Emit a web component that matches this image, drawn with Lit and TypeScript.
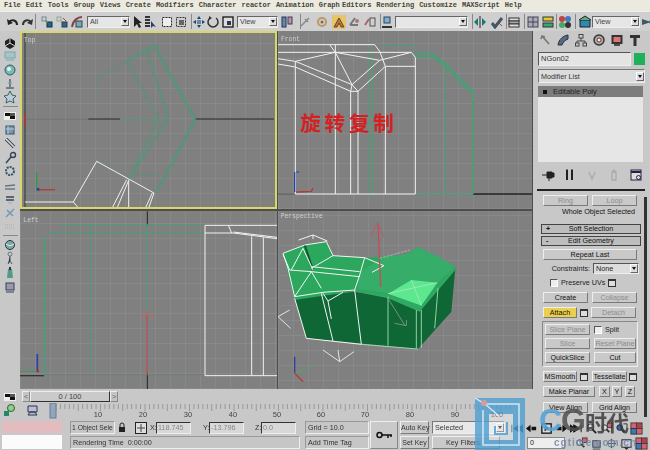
import { LitElement, html, css, svg } from "lit";
import { customElement } from "lit/decorators.js";

const ICONS: Record<string, unknown> = {
  undo: svg`<path d="M11 10C11 5 6 4 3 7" fill="none" stroke="#222" stroke-width="2"/><path d="M1 4l1 6 5-2z" fill="#222"/>`,
  redo: svg`<path d="M3 10C3 5 8 4 11 7" fill="none" stroke="#333" stroke-width="2"/><path d="M13 4l-1 6-5-2z" fill="#333"/>`,
  link: svg`<rect x="2" y="2" width="4" height="4" fill="none" stroke="#789"/><rect x="7" y="7" width="5" height="5" fill="#268" stroke="#134"/><path d="M5 5l3 3" stroke="#2a8a50"/>`,
  unlink: svg`<rect x="2" y="2" width="4" height="4" fill="none" stroke="#8a9"/><rect x="7" y="7" width="5" height="5" fill="#367" stroke="#245"/><path d="M8 3l3 3" stroke="#c33"/>`,
  bind: svg`<path d="M2 12C3 5 8 2 12 2" fill="none" stroke="#844" stroke-width="2"/><rect x="6" y="6" width="6" height="6" fill="#7aa" stroke="#345"/>`,
  arrow: svg`<path d="M4 1v11l3-3 2 4 2-1-2-4h3z" fill="#222"/>`,
  byname: svg`<path d="M2 2h5M2 5h5M2 8h5M2 11h5" stroke="#333" stroke-width="2"/><path d="M8 6v7l2-2 3 1z" fill="#246"/>`,
  rect: svg`<rect x="2.5" y="2.5" width="9" height="9" fill="#eee" stroke="#222" stroke-dasharray="2 1"/>`,
  win: svg`<rect x="2.5" y="2.5" width="9" height="9" fill="none" stroke="#333" stroke-dasharray="2 1"/><rect x="5" y="5" width="5" height="5" fill="#666"/>`,
  move: svg`<path d="M7 1l2 3H5zM7 13l2-3H5zM1 7l3-2v4zM13 7l-3-2v4z" fill="#246"/><rect x="5" y="5" width="4" height="4" fill="#68a"/>`,
  rot: svg`<path d="M4 3a5 5 0 1 0 6 0" fill="none" stroke="#333" stroke-width="1.5"/><path d="M3 1l3 2-3 2z" fill="#333"/>`,
  scale: svg`<rect x="2" y="2" width="10" height="10" fill="#ddd" stroke="#222" stroke-width="1.4"/><rect x="6" y="6" width="4" height="4" fill="#335"/>`,
  center: svg`<rect x="2" y="2" width="4" height="10" fill="#68a" stroke="#235"/><rect x="8" y="2" width="4" height="7" fill="#a9a" stroke="#535"/>`,
  pin: svg`<path d="M3 11l8-8M7 4l3 3" stroke="#888" stroke-width="1.5"/>`,
  snap2: svg`<circle cx="7" cy="7" r="4" fill="none" stroke="#b96" stroke-width="2"/><circle cx="7" cy="7" r="1.5" fill="#864"/>`,
  magnet: svg`<rect width="14" height="14" fill="#e8c468"/><path d="M2 12L7 3l5 9H9L7 8l-2 4z" fill="#b67a30" stroke="#643"/>`,
  ang: svg`<path d="M3 10L8 3M3 10h8" stroke="#777" stroke-width="2"/><circle cx="10" cy="6" r="2" fill="#a77"/>`,
  pct: svg`<path d="M2 10l4-6" stroke="#a66" stroke-width="2"/><rect x="7" y="3" width="5" height="8" fill="none" stroke="#555"/>`,
  spin: svg`<rect x="4" y="2" width="6" height="6" fill="#8ac" stroke="#246"/><path d="M2 12h10" stroke="#333" stroke-width="2"/>`,
  mirror: svg`<path d="M7 1v12" stroke="#222"/><path d="M5 3v8L1 7zM9 3v8l4-4z" fill="#1a7a70"/>`,
  align: svg`<path d="M2 8l3 4 7-9" fill="none" stroke="#456" stroke-width="3"/><path d="M9 8l3 3" stroke="#b33"/>`,
  layers: svg`<rect x="2" y="3" width="10" height="3" fill="#ddd" stroke="#333"/><rect x="2" y="6" width="10" height="3" fill="#aaa" stroke="#333"/><rect x="2" y="9" width="10" height="3" fill="#ddd" stroke="#333"/>`,
  curve: svg`<rect x="2" y="2" width="10" height="10" fill="#aab" stroke="#445"/><path d="M2 7h10M7 2v10" stroke="#445"/>`,
  schem: svg`<rect x="2" y="2" width="10" height="4" fill="#dc3" stroke="#333"/><rect x="2" y="8" width="10" height="4" fill="#3a7" stroke="#333"/>`,
  mat: svg`<circle cx="4" cy="4" r="3" fill="#b44"/><circle cx="10" cy="4" r="3" fill="#47b"/><circle cx="4" cy="10" r="3" fill="#4a6"/><circle cx="10" cy="10" r="3" fill="#333"/>`,
  render: svg`<path d="M2 5h10v7H2z" fill="#38a" stroke="#123"/><path d="M1 5l6-4 6 4" fill="#6a7" stroke="#123"/>`,
  quick: svg`<path d="M2 4l9 3-9 3z" fill="#456"/><circle cx="11" cy="7" r="2" fill="#287"/>`,
  cmdCreate: svg`<path d="M4 3l7 8M3 6l1-3 3 1" stroke="#777" stroke-width="1.6" fill="none"/>`,
  cmdMod: svg`<path d="M2 12C3 6 7 3 12 2v4C9 7 7 9 6 12z" fill="#5a6a80" stroke="#234"/>`,
  cmdHier: svg`<path d="M7 5v3M3 10V8h8v2" stroke="#444" fill="none"/><rect x="5" y="1.5" width="4" height="3.5" fill="#ccc" stroke="#444"/><rect x="1.5" y="10" width="3.5" height="3" fill="#ccc" stroke="#444"/><rect x="9" y="10" width="3.5" height="3" fill="#ccc" stroke="#444"/>`,
  cmdMot: svg`<circle cx="7" cy="7" r="5" fill="#aaa" stroke="#333" stroke-width="1.4"/><circle cx="7" cy="7" r="2" fill="#eee" stroke="#833"/>`,
  cmdDisp: svg`<rect x="1.5" y="2" width="11" height="9" fill="#333"/><rect x="3.5" y="4" width="7" height="5" fill="#d77"/><path d="M4 12h6" stroke="#333" stroke-width="1.6"/>`,
  cmdUtil: svg`<path d="M2 2h10v3H8.5v8h-3V5H2z" fill="#333"/>`,
  pinS: svg`<path d="M1 7h5M6 4h5v6H6zM11 5h2v4h-2zM8 10v3" stroke="#222" fill="#222"/>`,
  fork: svg`<path d="M4 2v10M9 2v10" stroke="#222" stroke-width="2"/><path d="M3 2h2M8 2h2" stroke="#222"/>`,
  vv: svg`<path d="M4 4l3 7 3-7" fill="none" stroke="#aaa" stroke-width="1.3"/>`,
  trash: svg`<path d="M5 4h4v8H5z" fill="none" stroke="#aaa" stroke-width="1.3"/><circle cx="7" cy="3" r="1.3" fill="none" stroke="#aaa"/>`,
  cfg: svg`<rect x="2" y="2" width="10" height="10" fill="#ddd" stroke="#224"/><path d="M2 4h10" stroke="#224" stroke-width="2"/><circle cx="9.5" cy="9.5" r="2" fill="none" stroke="#224"/>`,
  sphere: svg`<circle cx="7" cy="7" r="4.5" fill="#7aa" stroke="#333"/><path d="M3 6c3 2 5 2 8 0" stroke="#eee" fill="none"/>`,
  geom: svg`<path d="M7 2l5 3v5l-5 3-5-3V5z" fill="#222"/><path d="M7 2v5l5 3M7 7l-5 3" stroke="#ddd"/>`,
  shapes: svg`<rect x="2" y="3" width="10" height="6" fill="#a8c4c8" stroke="#7aa"/><path d="M3 11h8" stroke="#9bb" stroke-width="2"/>`,
  lights: svg`<circle cx="7" cy="7" r="5" fill="#7ba" stroke="#357"/><circle cx="6" cy="6" r="2" fill="#eee"/>`,
  cam: svg`<path d="M7 2v8M3 11h8" stroke="#567" stroke-width="1.5"/><path d="M5 6h4" stroke="#7a9"/>`,
  star: svg`<path d="M7 1l2 4 4 1-3 3 1 4-4-2-4 2 1-4-3-3 4-1z" fill="#bcd" stroke="#365"/>`,
  film: svg`<rect x="1" y="3" width="12" height="8" fill="#eee"/><rect x="2" y="4" width="5" height="3" fill="#111"/><rect x="7" y="7" width="5" height="3" fill="#111"/><rect x="7" y="4" width="5" height="3" fill="#555"/>`,
  box3: svg`<rect x="3" y="3" width="8" height="8" fill="#79a" stroke="#356"/><path d="M5 3v8M3 6h8" stroke="#bcd"/>`,
  tube: svg`<path d="M3 3l8 8" stroke="#345" stroke-width="3.4"/><path d="M3 3l8 8" stroke="#ddd" stroke-width="1.6"/>`,
  key2: svg`<circle cx="10" cy="4" r="2.5" fill="none" stroke="#345" stroke-width="1.4"/><path d="M8 6l-5 6" stroke="#345" stroke-width="1.4"/>`,
  gear: svg`<circle cx="7" cy="7" r="4" fill="none" stroke="#356" stroke-width="2" stroke-dasharray="2 1"/>`,
  dash: svg`<path d="M2 5l10-1M2 8h10" stroke="#678" stroke-width="1.4"/>`,
  dash2: svg`<path d="M3 4h8M3 7h8" stroke="#345" stroke-width="1.4"/><path d="M5 10h4" stroke="#aaa"/>`,
  blue: svg`<path d="M3 11L11 3M4 4l6 6" stroke="#79b" stroke-width="1.6"/>`,
  faint: svg`<path d="M2 6h10M2 9h10" stroke="#aaa" stroke-dasharray="1 1"/>`,
  walk: svg`<circle cx="7" cy="3" r="2" fill="none" stroke="#678"/><path d="M7 5v5l-2 3M7 10l2 3" stroke="#456"/>`,
  bottle: svg`<path d="M5 3h4l1 9H4z" fill="#598"/><path d="M6 1h2v3H6z" fill="#334"/>`,
  zoom: svg`<circle cx="6" cy="5.500" r="3.500" fill="#cde" stroke="#222"/><path d="M8 8l4 4" stroke="#222" stroke-width="2"/>`,
  zoomR: svg`<circle cx="5" cy="6" r="3" fill="#cde" stroke="#333"/><path d="M7 8l3 3" stroke="#333" stroke-width="2"/><rect x="8" y="1" width="5" height="5" fill="#c67" stroke="#533"/>`,
  zoomB: svg`<circle cx="5" cy="6" r="3" fill="#36a" stroke="#123"/><path d="M7 8l3 3" stroke="#123" stroke-width="2"/><path d="M9 2h4v4" fill="none" stroke="#333"/>`,
  zoomG: svg`<rect x="1" y="1" width="6" height="6" fill="#c67" stroke="#533"/><rect x="7" y="1" width="6" height="6" fill="#a45" stroke="#533"/><rect x="1" y="7" width="6" height="6" fill="#47a" stroke="#235"/><rect x="7" y="7" width="6" height="6" fill="#c67" stroke="#533"/>`,
  fist: svg`<rect x="3" y="4" width="8" height="7" fill="#99a" stroke="#345"/><path d="M3 13h8" stroke="#345"/>`,
  orbit: svg`<circle cx="7" cy="7" r="4" fill="none" stroke="#678"/><path d="M2 7h10M7 2v10" stroke="#456"/>`,
  trk: svg`<rect x="2" y="3" width="10" height="8" fill="#ccd" stroke="#222"/><path d="M4 11l3 3 3-3" fill="#333"/>`,
  magG: svg`<circle cx="8" cy="5" r="3.500" fill="#9c8" stroke="#263"/><path d="M5 8l-3 4" stroke="#263" stroke-width="2"/><path d="M1 8h5v5H1z" fill="#286"/>`,
  prev: svg`<path d="M2 3v8M10 3v8L4 7zM14 3v8L8 7z" fill="#12345a" stroke="#12345a"/>`,
  stepB: svg`<path d="M6 3v8L1 7zM12 5v4H7V5z" fill="#111"/>`,
  play: svg`<rect x="2" y="2" width="10" height="10" fill="#ddd" stroke="#111" stroke-width="1.400"/><path d="M5 4v6l5-3z" fill="#111"/>`,
  stepF: svg`<path d="M8 3v8l5-4zM2 5v4h5V5z" fill="#111"/>`,
  next: svg`<path d="M12 3v8M4 3v8l6-4zM0 3v8l6-4z" fill="#111" stroke="#111"/>`,
};

const icon = (name: string) => html`<svg class="ic" viewBox="0 0 14 14">${ICONS[name]}</svg>`;

const TOOLS: [string, number][] = [
  ["undo", 13], ["redo", 27], ["|", 35], ["link", 47], ["unlink", 62], ["bind", 77], ["#all", 87],
  ["arrow", 137], ["byname", 150], ["rect", 167], ["win", 181], ["|", 191], ["move", 199], ["rot", 213], ["scale", 228],
  ["#view", 237], ["center", 287], ["|", 300], ["pin", 305], ["snap2", 322], ["magnet", 339], ["ang", 354], ["pct", 370],
  ["|", 380], ["spin", 387], ["#named", 395], ["|", 472], ["mirror", 480], ["align", 497], ["|", 506], ["layers", 514], ["|", 524],
  ["curve", 533], ["schem", 548], ["|", 556], ["mat", 565], ["|", 575], ["render", 585], ["#view2", 592], ["quick", 647],
];

const LEFT: [string, number][] = [
  ["geom", 43], ["shapes", 56], ["lights", 70], ["cam", 84], ["star", 97], ["-", 106], ["film", 116], ["box3", 130], ["tube", 143],
  ["key2", 158], ["gear", 171], ["dash", 188], ["dash2", 200], ["blue", 213], ["faint", 226], ["-", 235], ["sphere", 245], ["walk", 258], ["bottle", 273], ["fist", 286],
];

const itemWidth = (k: string) => (k === "|" ? 1 : k === "#all" ? 43 : k === "#view" ? 41 : k === "#named" ? 73 : k === "#view2" ? 48 : 14);
const itemStart = (k: string, x: number) => (k.startsWith("#") || k === "|" ? x : x - 7);

const GRID_DEFS = svg`<defs><pattern id="g" width="45" height="45" patternUnits="userSpaceOnUse"><path d="M45 0H0V45" fill="none" stroke="#939393" stroke-width="2.500"/></pattern></defs>`;

@customElement("app-root")
export class AppRoot extends LitElement {
  static styles = css`
    :host { display: block; width: 650px; height: 450px; overflow: hidden; position: relative; background: #c8c8c8; font-family: "Liberation Sans", Arial, sans-serif; font-size: 7.2px; color: #222; }
    * { box-sizing: border-box; }
    .blurred { width: 650px; height: 450px; display: flex; flex-direction: column; filter: blur(0.5px); }
    .menu { height: 11px; background: #eceadf; display: flex; gap: 5px; word-spacing: -2px; padding-left: 4px; align-items: center; font: bold 7px/11px "Liberation Mono", monospace; color: #444; white-space: nowrap; }
    .toolbar { height: 20px; display: flex; align-items: center; background: #cfcfcf; border-top: 1px solid #eee; flex: none; }
    .ic { width: 14px; height: 14px; display: block; flex: none; }
    .tsep { width: 1px; height: 15px; background: #888; flex: none; }
    .combo { height: 12px; background: #e6e6e6; border: 1px solid; border-color: #666 #eee #eee #666; display: flex; align-items: center; justify-content: space-between; padding-left: 2px; font-size: 7.2px; color: #444; flex: none; }
    .drop { width: 8px; height: 9px; background: #ddd; border: 1px solid; border-color: #fff #666 #666 #fff; display: flex; align-items: center; justify-content: center; flex: none; }
    .drop::after { content: ""; border: 2px solid transparent; border-top: 3px solid #111; border-bottom: 0; }
    .body { display: flex; height: 389px; flex: none; }
    .left { width: 533px; display: flex; flex-direction: column; flex: none; }
    .main { display: flex; height: 358px; flex: none; }
    .lbar { width: 20px; display: flex; flex-direction: column; align-items: center; flex: none; }
    .lsep { width: 15px; height: 1px; background: #888; flex: none; }
    .vps { display: grid; grid-template-columns: 257px 254px; grid-template-rows: 178px 178px; column-gap: 1px; row-gap: 2px; background: #4e4e4e; width: 513px; height: 358px; padding-right: 1px; }
    .vp { background: #808080; position: relative; overflow: hidden; }
    .vp svg { display: block; width: 100%; height: 100%; }
    .active { outline: 2px solid #d8d868; outline-offset: -2px; }
    .vt { font: 19px "Liberation Mono", monospace; fill: #d0d0d0; }
    .cn { font-family: "Noto Sans CJK SC", sans-serif; font-weight: 700; font-size: 62px; fill: #d42020; letter-spacing: 11px; }
    .slider { height: 14px; display: flex; align-items: center; flex: none; padding-top: 1px; }
    .slbtn { width: 8px; height: 11px; background: #c4c4c4; border: 1px solid; border-color: #eee #888 #888 #eee; font-size: 7px; display: flex; align-items: center; justify-content: center; color: #666; flex: none; }
    .sl { width: 80px; height: 11px; background: #cacaca; border: 1px solid; border-color: #eee #333 #333 #eee; text-align: center; line-height: 9px; font-size: 7.5px; color: #444; flex: none; }
    .icoL { width: 20px; display: flex; justify-content: center; flex: none; }
    .ml2 { margin-left: 2px; }
    .track { height: 17px; display: flex; flex: none; }
    .track svg.tk { width: 513px; height: 17px; display: block; }
    .tknum { font: 7.5px "Liberation Sans", sans-serif; fill: #444; text-anchor: middle; }
    .panel { width: 117px; flex: none; padding: 2px 0 0 5px; background: #c8c8c8; display: flex; flex-direction: column; position: relative; }
    .tabs { display: flex; height: 15px; gap: 4px; flex: none; }
    .row { display: flex; flex: none; align-items: center; }
    .name { width: 93px; height: 14px; background: #e4e4e4; border: 1px solid; border-color: #555 #eee #eee #555; font-size: 7.5px; line-height: 12px; padding-left: 2px; color: #333; }
    .swatch { width: 11px; height: 12px; background: #1fb059; margin-left: 3px; }
    .mod { width: 107px; height: 14px; margin-top: 3px; background: #dcdcdc; border: 1px solid; border-color: #777 #eee #eee #777; display: flex; align-items: center; justify-content: space-between; padding-left: 2px; color: #333; flex: none; }
    .stack { width: 105px; height: 76px; margin-top: 3px; background: #e6e6e6; flex: none; }
    .stackrow { height: 11px; background: #7c7c7c; color: #222; display: flex; align-items: center; gap: 6px; padding-left: 5px; font-size: 7.5px; }
    .bullet { width: 4px; height: 4px; background: #111; flex: none; }
    .stackicons { margin-top: 6px; height: 14px; display: flex; gap: 8px; padding-left: 3px; flex: none; }
    .thick { width: 108px; height: 2px; margin: 7px 0 0 -1px; background: #222; flex: none; }
    .roll { position: relative; padding-left: 3px; flex: 1; margin-top: 4px; }
    .scroll { position: absolute; right: 3px; top: 2px; bottom: 3px; width: 3px; background: #333; }
    .bb { height: 11px; background: #c9c9c9; border: 1px solid; border-color: #eee #7a7a7a #7a7a7a #eee; line-height: 9px; text-align: center; color: #111; white-space: nowrap; flex: none; }
    .dis { color: #8c8c8c; }
    .w45 { width: 45px; }
    .two { display: flex; gap: 4px; padding-left: 2px; flex: none; }
    .topbox { width: 100px; height: 18px; text-align: right; padding: 1px 6px 0 0; color: #111; line-height: 10px; flex: none; }
    .rb { width: 100px; height: 10px; background: #bdbdbd; border: 1px solid #444; line-height: 8px; text-align: center; position: relative; color: #111; flex: none; }
    .rb b { position: absolute; left: 4px; top: 0; font-weight: 700; }
    .rb2 { margin-top: 2px; }
    .wide { width: 94px; }
    .constr { display: flex; align-items: center; height: 11px; margin-top: 3px; flex: none; }
    .constr > span { width: 49px; text-align: right; margin-right: 3px; }
    .sel { width: 46px; height: 11px; background: #ddd; border: 1px solid; border-color: #555 #eee #eee #555; display: flex; align-items: center; justify-content: space-between; padding-left: 2px; }
    .chk { width: 8px; height: 8px; background: #eee; border: 1px solid; border-color: #555 #fff #fff #555; flex: none; }
    .pres { display: flex; align-items: center; height: 11px; margin-top: 3px; padding-left: 9px; flex: none; }
    .pres span { margin-left: 3px; width: 47px; white-space: nowrap; }
    .dots { width: 8px; height: 8px; background: #ddd; border: 1px solid #333; border-top-width: 2px; flex: none; }
    .att { width: 34px; background: #ecd04c; }
    .m3 { margin-top: 3px; }
    .m4 { margin-top: 4px; }
    .m5 { margin-top: 5px; }
    .cen { align-self: center; }
    .d1 { margin-left: 3px; }
    .d2 { margin: 0 4px 0 3px; }
    .d3 { margin-left: 2px; }
    .ml3 { margin-left: 3px; }
    .gap0 { gap: 0; align-items: center; }
    .w34 { width: 34px; }
    .w35 { width: 35px; }
    .w42 { width: 42px; }
    .w52 { width: 52px; }
    .w11 { width: 11px; }
    .wy { width: 10px; margin-left: -2px; }
    .wz { width: 10px; margin-left: -1px; }
    .gp { width: 96px; height: 46px; margin: 3px 0 0 1px; border: 1px solid #888; border-right-color: #eee; border-bottom-color: #eee; padding: 2px 0 0 2px; flex: none; display: flex; flex-direction: column; gap: 3px; }
    .gp .two { padding-left: 0; }
    .gtxt { margin-left: 3px; }
    .status { height: 30px; display: flex; flex: none; background: #c8c8c8; }
    .stL { width: 60px; margin-left: 2px; display: flex; flex-direction: column; gap: 2px; padding-top: 1px; flex: none; }
    .pink { height: 12px; background: #e2bcbf; }
    .white { height: 14px; background: #fbfbfb; }
    .stM { width: 230px; margin-left: 8px; display: flex; flex-direction: column; gap: 2px; padding-top: 1px; flex: none; }
    .sunk { height: 13px; background: #c6c6c6; border: 1px solid; border-color: #999 #eee #eee #999; line-height: 11px; padding-left: 2px; color: #333; white-space: nowrap; overflow: hidden; flex: none; }
    .sel1 { width: 45px; margin-right: -2px; font-size: 6.8px; padding-left: 1px; }
    .stRow { display: flex; align-items: center; height: 13px; flex: none; }
    .coord { height: 12px; background: #d8d8d8; border: 1px solid; border-color: #333 #eee #eee #333; line-height: 10px; padding-left: 1px; color: #888; width: 35px; flex: none; }
    .lab { width: 6px; color: #333; flex: none; }
    .lx { margin-left: 3px; }
    .ly { margin-left: 12px; }
    .lz { margin-left: 11px; }
    .sm { width: 12px; height: 12px; flex: none; }
    .sm1 { margin-left: 3px; }
    .sm2 { margin-left: 7px; }
    .stG { width: 64px; margin-left: 5px; display: flex; flex-direction: column; gap: 2px; padding-top: 1px; flex: none; }
    .keyb { width: 28px; height: 28px; margin: 1px 0 0 1px; background: #c9c9c9; border: 1px solid; border-color: #eee #888 #888 #eee; display: flex; align-items: center; justify-content: center; flex: none; }
    .keyb svg { width: 16px; height: 8px; }
    .stK { width: 29px; margin-left: 2px; display: flex; flex-direction: column; gap: 2px; padding-top: 1px; flex: none; }
    .stK .bb { height: 13px; line-height: 11px; font-size: 7px; color: #333; }
    .stF { width: 78px; margin-left: 3px; display: flex; flex-direction: column; gap: 2px; padding-top: 1px; flex: none; }
    .stF .bb { height: 13px; width: 68px; line-height: 11px; color: #333; }
    .selc { height: 13px; width: 73px; background: #e8e8e8; border: 1px solid; border-color: #777 #eee #eee #777; display: flex; align-items: center; justify-content: space-between; padding-left: 2px; color: #333; flex: none; }
    .nav { flex: 1; display: flex; flex-direction: column; gap: 1px; padding-top: 1px; min-width: 0; }
    .navrow { display: flex; align-items: center; gap: 2px; height: 14px; flex: none; }
    .navrow .ic { width: 13px; height: 13px; }
    .frame { width: 38px; height: 12px; margin-left: 17px; margin-right: 8px; background: #eee; border: 1px solid #888; line-height: 10px; padding-left: 2px; flex: none; }
    .wm { position: absolute; left: 475px; top: 398px; width: 175px; height: 52px; pointer-events: none; display: flex; filter: blur(0.4px); }
    .wmsq { width: 50px; height: 52px; flex: none; }
    .wmt { position: relative; margin-left: 14px; flex: 1; }
    .wmcg { position: absolute; left: 0; top: 6px; font: 700 32px/32px "Liberation Sans", sans-serif; color: rgba(80, 80, 80, 0.85); white-space: nowrap; letter-spacing: -1px; }
    .wmcg i { font-style: normal; color: rgba(84, 164, 214, 0.9); }
    .wmcg span { font-family: "Noto Sans CJK SC", sans-serif; font-size: 22px; color: rgba(60, 60, 60, 0.85); letter-spacing: 0; }
    .wmu { position: absolute; left: 15px; top: 39px; font: 700 10px/12px "Liberation Sans", sans-serif; color: rgba(115, 135, 165, 0.85); letter-spacing: 1px; white-space: nowrap; }
  `;

  private btn(t: string, cls = "") {
    return html`<div class="bb ${cls}">${t}</div>`;
  }

  private toolbar() {
    let cur = 0;
    return TOOLS.map(([k, x]) => {
      const s = itemStart(k, x);
      const gap = s - cur;
      cur = s + itemWidth(k);
      const st = `margin-left:${gap}px`;
      if (k === "|") return html`<div class="tsep" style=${st}></div>`;
      if (k.startsWith("#")) {
        const t = k === "#all" ? "All" : k === "#named" ? "" : "View";
        return html`<div class="combo" style="${st};width:${itemWidth(k)}px"><span>${t}</span><div class="drop"></div></div>`;
      }
      return html`<div style=${st}>${icon(k)}</div>`;
    });
  }

  private leftbar() {
    let cur = 31;
    return LEFT.map(([k, y]) => {
      const s = k === "-" ? y : y - 7;
      const st = `margin-top:${s - cur}px`;
      cur = s + (k === "-" ? 1 : 14);
      return k === "-" ? html`<div class="lsep" style=${st}></div>` : html`<div style=${st}>${icon(k)}</div>`;
    });
  }

  private vpTop() {
    return html`<div class="vp active"><svg viewBox="0 9 771 534">${GRID_DEFS}
      <rect y="0" width="771" height="540" fill="url(#g)"/>
      <path d="M15 10V540" stroke="#333" stroke-width="3"/>
      <path d="M15 273H205" stroke="#666" stroke-width="2"/>
      <path d="M205 273H300M525 273H762" stroke="#222" stroke-width="3"/>
      <path d="M15 255V295" stroke="#b33" stroke-width="4"/>
      <g fill="none" stroke="#4b9a78" stroke-linejoin="round" opacity=".68">
        <path d="M400 48L525 275L410 492" stroke-width="9"/>
        <path d="M380 68L445 270L325 455" stroke-width="6"/>
        <path d="M320 98L380 65L415 50" stroke-width="8"/>
        <path d="M320 98L415 270L330 445" stroke-width="5"/>
        <path d="M232 150L320 100" stroke-width="5" opacity=".6"/>
        <path d="M232 150V190M232 385L320 450" stroke-width="3" opacity=".6"/>
        <path d="M300 273H440" stroke-width="4"/>
        <path d="M345 440H420" stroke-width="4" opacity=".7"/>
      </g>
      <g fill="none" stroke="#f0f0f0" stroke-width="3">
        <path d="M15 522H160L230 400L402 495L385 543"/>
        <path d="M160 522L178 543M320 455L275 543M326 457L290 543M326 457V543M397 495L375 543"/>
      </g>
      <path d="M50 432V482" stroke="#2f9a4a" stroke-width="4"/><path d="M52 485H105" stroke="#b53a3a" stroke-width="4"/><rect x="50" y="480" width="8" height="8" fill="#2a3f98"/>
      <text class="vt" x="12" y="42">Top</text></svg></div>`;
  }

  private vpFront() {
    return html`<div class="vp"><svg viewBox="0 9 762 534">
      <rect y="0" width="762" height="543" fill="url(#g)"/>
      <path d="M585 498H762" stroke="#222" stroke-width="4"/>
      <path d="M0 498H52" stroke="#444" stroke-width="2"/>
      <g fill="none" stroke="#46a076" stroke-width="3">
        <path d="M272 58V498M310 50H415M285 75V498M415 498H585M500 105V498"/>
        <path d="M405 75H460L500 105L585 190V498" stroke-width="5"/>
        <path d="M412 85H465L505 120L580 195" stroke-width="5"/>
      </g>
      <g fill="none" stroke="#f2f2f2" stroke-width="3" stroke-linejoin="round">
        <path d="M0 50H290L305 70L322 115M0 73H400L412 88V498H52V100"/>
        <path d="M0 92L52 100L172 73L305 97L400 73M0 108L52 117L218 190H240L322 115H412"/>
        <path d="M52 100L222 170L305 97M222 170L218 190M222 170L240 190M155 50L172 73L222 170"/>
        <path d="M172 50V498M218 190V498M240 190V498M322 115V498"/>
      </g>
      <path d="M50 432V492" stroke="#2a3fa8" stroke-width="4"/><path d="M55 432H64" stroke="#2a3fa8" stroke-width="3"/>
      <path d="M55 492L100 490L105 480" stroke="#b53a3a" stroke-width="4" fill="none"/>
      <text class="vt" x="9" y="38">Front</text>
      <text class="cn" x="66" y="308">旋转复制</text></svg></div>`;
  }

  private vpLeft() {
    return html`<div class="vp"><svg viewBox="0 9 771 534">
      <rect y="0" width="771" height="543" fill="url(#g)"/>
      <path d="M382 10V52M382 495V543" stroke="#222" stroke-width="3"/>
      <path d="M0 503H72" stroke="#333" stroke-width="4"/>
      <path d="M72 500H550" stroke="#6d7f74" stroke-width="3"/>
      <g fill="none" stroke="#46a076" stroke-width="3">
        <path d="M120 50H552M85 74H552M212 50V495M380 50V495" />
        <path d="M74 85V500" stroke-width="7" opacity=".7"/>
      </g>
      <path d="M381 500V322" stroke="#c84a5a" stroke-width="4"/>
      <path d="M365 332L382 312L400 332" stroke="#b86a6a" stroke-width="4" fill="none"/>
      <g fill="none" stroke="#f2f2f2" stroke-width="3">
        <path d="M771 52H555V503H771M555 75H640L771 92M625 52L635 75M640 72L771 88M695 85V503M730 88V503"/>
      </g>
      <path d="M52 438V490" stroke="#2a3fa8" stroke-width="5"/><path d="M0 490H50" stroke="#3d9a58" stroke-width="3"/><rect x="50" y="486" width="7" height="7" fill="#a33"/>
      <text class="vt" x="10" y="42">Left</text></svg></div>`;
  }

  private vpPersp() {
    return html`<div class="vp"><svg viewBox="0 -12 762 534">
      <rect y="-12" width="762" height="540" fill="url(#g)"/>
      <path d="M50 250L85 370L420 402L520 290L532 160L425 285L330 245L230 230Z" fill="#0e6734"/>
      <path d="M15 115L80 90L145 80L165 122L260 128L320 125L385 118L420 97L480 125L532 155L425 285L330 242L232 228L50 255Z" fill="#2ca75e"/>
      <path d="M245 170L320 125L385 118L420 97L480 125L532 155L478 203L400 195L330 235L240 222Z" fill="#36ad69"/>
      <path d="M330 236L400 195L478 203L430 272Z" fill="#5de890"/>
      <path d="M330 238L430 272L532 155V165L425 290L330 250L232 230Z" fill="#30a962"/>
      <path d="M80 90L105 165" stroke="#0c5a2c" stroke-width="6"/>
      <g fill="none" stroke="#f4f4f4" stroke-width="3" stroke-linejoin="round">
        <path d="M15 115L80 90L145 80L165 122L260 128L245 180L230 225L135 232L50 245L30 160Z"/>
        <path d="M50 250L85 370L250 388M130 235L165 378M230 225L250 388M75 100L105 165M15 118L35 165L100 170L245 185"/>
        <path d="M100 170L50 245M100 170L130 220M165 122L100 160M260 128L318 152L282 172M100 155L245 170M40 165L75 100"/>
        <path d="M62 75L105 60L148 78M105 60V72M150 258L195 232M150 258L160 312M135 235L150 258"/>
        <path d="M35 285L0 305L38 340M135 405L185 440L228 410M180 405L185 440" stroke="#e4e4e4"/>
      </g>
      <g fill="none" stroke="#a9e8bb" stroke-width="2.500">
        <path d="M250 388L420 402M330 245V392M415 285V400M430 285V398M480 220L470 340M400 195L430 272M330 236L478 203"/>
      </g>
      <path d="M300 25L308 215" stroke="#c84a5a" stroke-width="4"/>
      <path d="M278 65L298 25L318 65" stroke="#b85c66" stroke-width="3" fill="none"/>
      <path d="M330 250L380 330M350 325L385 332L385 315" stroke="#8a9a94" stroke-width="2.500" fill="none"/>
      <path d="M305 130L395 105" stroke="#b9b9b9" stroke-width="2.500" stroke-dasharray="8 3"/>
      <path d="M50 425V475" stroke="#2a3fa8" stroke-width="4"/><path d="M50 475L105 452" stroke="#5aa068" stroke-width="3.500"/><path d="M50 475L75 500" stroke="#b53a3a" stroke-width="4"/>
      <text class="vt" x="8" y="8">Perspective</text></svg></div>`;
  }

  private panel() {
    return html`<div class="panel">
      <div class="tabs">${["cmdCreate", "cmdMod", "cmdHier", "cmdMot", "cmdDisp", "cmdUtil"].map((n) => icon(n))}</div>
      <div class="row m4"><div class="name">NGon02</div><div class="swatch"></div></div>
      <div class="mod"><span>Modifier List</span><div class="drop"></div></div>
      <div class="stack"><div class="stackrow"><div class="bullet"></div><span>Editable Poly</span></div></div>
      <div class="stackicons">${["pinS", "fork", "vv", "trash", "cfg"].map((n) => icon(n))}</div>
      <div class="thick"></div>
      <div class="roll">
        <div class="scroll"></div>
        <div class="two">${this.btn("Ring", "w45 dis")}${this.btn("Loop", "w45 dis")}</div>
        <div class="topbox">Whole Object Selected</div>
        <div class="rb"><b>+</b>Soft Selection</div>
        <div class="rb rb2"><b>-</b>Edit Geometry</div>
        <div class="two m3">${this.btn("Repeat Last", "wide")}</div>
        <div class="constr"><span>Constraints:</span><div class="sel"><span>None</span><div class="drop"></div></div></div>
        <div class="pres"><div class="chk"></div><span>Preserve UVs</span><div class="dots"></div></div>
        <div class="two m4">${this.btn("Create", "w45")}${this.btn("Collapse", "w45 dis")}</div>
        <div class="two m4 gap0">${this.btn("Attach", "att")}<div class="dots d1 cen"></div>${this.btn("Detach", "w45 dis ml3")}</div>
        <div class="gp">
          <div class="two">${this.btn("Slice Plane", "w45 dis")}<div class="row"><div class="chk"></div><span class="gtxt">Split</span></div></div>
          <div class="two">${this.btn("Slice", "w45 dis")}${this.btn("Reset Plane", "w42 dis")}</div>
          <div class="two">${this.btn("QuickSlice", "w45")}${this.btn("Cut", "w42")}</div>
        </div>
        <div class="two m4 gap0">${this.btn("MSmooth", "w34")}<div class="dots d2"></div>${this.btn("Tessellate", "w35")}<div class="dots d3"></div></div>
        <div class="two m4">${this.btn("Make Planar", "w52")}${this.btn("X", "w11")}${this.btn("Y", "wy")}${this.btn("Z", "wz")}</div>
        <div class="two m5">${this.btn("View Align", "w45")}${this.btn("Grid Align", "w45")}</div>
      </div>
    </div>`;
  }

  private track() {
    const labels = [[10, 98], [20, 143], [30, 188], [40, 233], [50, 277], [60, 321], [70, 365], [80, 410], [90, 455], [100, 497]];
    const ticks = [];
    for (let x = 56; x < 510; x += 4.45) ticks.push(svg`<path d="M${x - 20} 1V${(Math.round((x - 56) / 4.45) % 5 === 0) ? 8 : 6}" stroke="#999"/>`);
    return svg`${ticks}<rect x="30" y="0" width="6" height="15" fill="#94a4bc" stroke="#6a7a94"/>
      <path d="M8 3h9v6H8zM10 9h5l2 3H8z" fill="#b9bfd0" stroke="#2c3350"/>
      ${labels.map(([n, x]) => svg`<text class="tknum" x=${x - 20} y="14">${n}</text>`)}`;
  }

  render() {
    const menus = ["File", "Edit", "Tools", "Group", "Views", "Create", "Modifiers", "Character", "reactor", "Animation", "Graph Editors", "Rendering", "Customize", "MAXScript", "Help"];
    return html`<div class="blurred">
      <div class="menu">${menus.map((m) => html`<span>${m}</span>`)}</div>
      <div class="toolbar">${this.toolbar()}</div>
      <div class="body">
        <div class="left">
          <div class="main">
            <div class="lbar">${this.leftbar()}</div>
            <div class="vps">${this.vpTop()}${this.vpFront()}${this.vpLeft()}${this.vpPersp()}</div>
          </div>
          <div class="slider">
            <div class="icoL">${icon("film")}</div>
            <div class="ml2 slbtn">&lt;</div><div class="sl">0 / 100</div><div class="slbtn">&gt;</div>
          </div>
          <div class="track">
            <div class="icoL">${icon("magG")}</div>
            <svg class="tk" viewBox="0 0 513 17">${this.track()}</svg>
          </div>
        </div>
        ${this.panel()}
      </div>
      <div class="status">
        <div class="stL"><div class="pink"></div><div class="white"></div></div>
        <div class="stM">
          <div class="stRow">
            <div class="sunk sel1">1 Object Sele</div>
            <svg class="sm sm1" viewBox="0 0 12 12"><rect x="3" y="5" width="6" height="5" fill="#222"/><path d="M4 5V3a2 2 0 0 1 4 0v2" fill="none" stroke="#222"/></svg>
            <svg class="sm sm2" viewBox="0 0 12 12"><rect x=".5" y=".5" width="11" height="11" fill="#ddd" stroke="#222"/><path d="M6 2v8M2 6h8" stroke="#444"/></svg>
            <span class="lab lx">X:</span><div class="coord">118.745</div>
            <span class="lab ly">Y:</span><div class="coord">-13.796</div>
            <span class="lab lz">Z:</span><div class="coord">0.0</div>
          </div>
          <div class="sunk">Rendering Time&nbsp; 0:00:00</div>
        </div>
        <div class="stG"><div class="sunk">Grid = 10.0</div><div class="sunk">Add Time Tag</div></div>
        <div class="keyb"><svg viewBox="0 0 16 8"><circle cx="3.500" cy="4" r="2.500" fill="none" stroke="#111" stroke-width="1.500"/><path d="M6 4h10M12 4v3M15 4v2" stroke="#111" stroke-width="1.500"/></svg></div>
        <div class="stK"><div class="bb">Auto Key</div><div class="bb">Set Key</div></div>
        <div class="stF"><div class="selc"><span>Selected</span><div class="drop"></div></div><div class="bb">Key Filters...</div></div>
        <div class="nav">
          <div class="navrow">${["prev", "stepB", "play", "stepF", "next", "zoom", "zoomR", "zoomB", "zoomG"].map((n) => icon(n))}</div>
          <div class="navrow"><div class="frame">0</div>${["zoomR", "fist", "orbit", "trk", "zoomG"].map((n) => icon(n))}</div>
        </div>
      </div>
    </div>
    <div class="wm">
      <svg class="wmsq" viewBox="0 0 50 52">
        <path fill-rule="evenodd" d="M0 0H50V52H0ZM14 16H38V42H14Z" fill="#4a9ed2" opacity=".78"/>
        <rect x="14" y="16" width="24" height="26" fill="#eef4f8" opacity=".35"/>
        <g fill="none" stroke="#e8f2f8" stroke-width="1.500" opacity=".85">
          <path d="M0 0L10 6L24 18"/><path d="M10 6H44V47H8V12"/>
        </g>
        <path d="M20 28V36H32V24" fill="none" stroke="#4a9ed2" stroke-width="2" opacity=".8"/>
        <circle cx="9" cy="5" r="3" fill="#d99a9a"/>
      </svg>
      <div class="wmt"><div class="wmcg"><i>C</i>G<span>时代</span></div><div class="wmu">cgtime.com.cn</div></div>
    </div>`;
  }
}
